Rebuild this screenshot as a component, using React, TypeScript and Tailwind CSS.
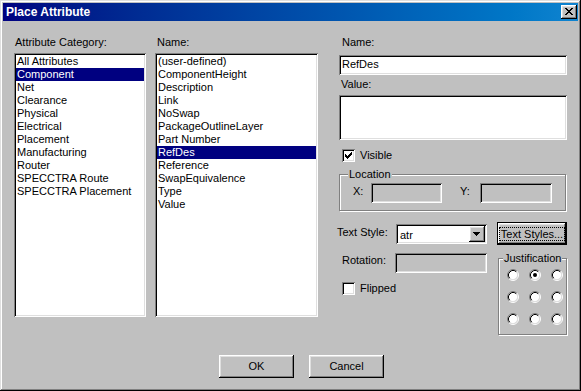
import React from "react";

const sunken =
  "shadow-[inset_1px_1px_#808080,inset_-1px_-1px_#fff,inset_2px_2px_#000,inset_-2px_-2px_#dfdfdf]";
const raised =
  "shadow-[inset_-1px_-1px_#000,inset_1px_1px_#fff,inset_-2px_-2px_#808080,inset_2px_2px_#dfdfdf]";
const etched = "border border-[#808080] shadow-[inset_1px_1px_#fff,1px_1px_#fff]";

const categories = [
  "All Attributes",
  "Component",
  "Net",
  "Clearance",
  "Physical",
  "Electrical",
  "Placement",
  "Manufacturing",
  "Router",
  "SPECCTRA Route",
  "SPECCTRA Placement",
];

const names = [
  "(user-defined)",
  "ComponentHeight",
  "Description",
  "Link",
  "NoSwap",
  "PackageOutlineLayer",
  "Part Number",
  "RefDes",
  "Reference",
  "SwapEquivalence",
  "Type",
  "Value",
];

const CHECK = ["......X", ".....XX", "X...XXX", "XX.XXX.", "XXXXX..", ".XXX...", "..X...."];
const CLOSE_X = ["XX....XX", ".XX..XX.", "..XXXX..", "...XX...", "..XXXX..", ".XX..XX.", "XX....XX"];
const ARROW = ["XXXXXXX", ".XXXXX.", "..XXX..", "...X..."];

function Pixels({ rows }: { rows: string[] }) {
  return (
    <svg width={rows[0].length} height={rows.length} shapeRendering="crispEdges" className="block">
      {rows.flatMap((r, y) =>
        [...r].map((c, x) =>
          c === "X" ? <rect key={`${x}-${y}`} x={x} y={y} width={1} height={1} fill="#000" /> : null
        )
      )}
    </svg>
  );
}

function ListBox({ items, selected, width }: { items: string[]; selected: string; width: string }) {
  return (
    <div className={`${width} h-[264px] bg-white p-[2px] ${sunken}`}>
      {items.map((it) => (
        <div
          key={it}
          className={`h-[13px] pl-[1px] whitespace-nowrap ${
            it === selected ? "bg-[#000080] text-white" : "text-black"
          }`}
        >
          {it}
        </div>
      ))}
    </div>
  );
}

function CheckBox({ checked }: { checked?: boolean }) {
  return (
    <div className={`w-[13px] h-[13px] shrink-0 bg-white p-[3px] ${sunken}`}>
      {checked && <Pixels rows={CHECK} />}
    </div>
  );
}

function Radio({ on }: { on?: boolean }) {
  return (
    <svg width="12" height="12" viewBox="0 0 12 12" className="block">
      <circle cx="6" cy="6" r="4.5" fill="#fff" />
      <path d="M2.11 9.89A5.5 5.5 0 0 1 9.89 2.11" stroke="#808080" fill="none" />
      <path d="M9.89 2.11A5.5 5.5 0 0 1 2.11 9.89" stroke="#fff" fill="none" />
      <path d="M2.82 9.18A4.5 4.5 0 0 1 9.18 2.82" stroke="#000" fill="none" />
      <path d="M9.18 2.82A4.5 4.5 0 0 1 2.82 9.18" stroke="#dfdfdf" fill="none" />
      {on && <circle cx="6" cy="6" r="2" fill="#000" />}
    </svg>
  );
}

function Button({ label }: { label: string }) {
  return (
    <div className={`w-[75px] h-[23px] flex items-center justify-center bg-[#c0c0c0] ${raised}`}>
      {label}
    </div>
  );
}

export default function App() {
  return (
    <div
      className={`w-[581px] h-[391px] bg-[#c0c0c0] p-[3px] flex flex-col text-[11px] leading-[13px] text-black font-['Liberation_Sans',Arial,sans-serif] shadow-[inset_-1px_-1px_#000,inset_1px_1px_#dfdfdf,inset_-2px_-2px_#808080,inset_2px_2px_#fff]`}
    >
      {/* title bar */}
      <div className="h-[18px] shrink-0 flex items-start bg-linear-to-r from-[#000080] to-[#1084d0]">
        <div className="flex-1 pl-[3px] text-[12px] leading-[18px] font-bold text-white">Place Attribute</div>
        <div className={`w-[16px] h-[14px] mt-[2px] mr-[1px] pl-[4px] pt-[3px] bg-[#c0c0c0] ${raised}`}>
          <Pixels rows={CLOSE_X} />
        </div>
      </div>

      <div className="flex-1 flex flex-col">
        <div className="flex pt-[15px] pl-[11px]">
          {/* category column */}
          <div className="w-[132px] flex flex-col">
            <div className="pl-[1px]">Attribute Category:</div>
            <div className="mt-[4px]">
              <ListBox items={categories} selected="Component" width="w-[132px]" />
            </div>
          </div>

          {/* name column */}
          <div className="ml-[9px] w-[163px] flex flex-col">
            <div className="pl-[2px]">Name:</div>
            <div className="mt-[4px]">
              <ListBox items={names} selected="RefDes" width="w-[163px]" />
            </div>
          </div>

          {/* properties column */}
          <div className="ml-[21px] w-[228px] flex flex-col">
            <div className="pl-[3px]">Name:</div>
            <div className={`mt-[6px] h-[20px] bg-white px-[3px] pt-[3px] ${sunken}`}>RefDes</div>
            <div className="mt-[3px] pl-[2px]">Value:</div>
            <div className={`mt-[4px] h-[45px] bg-white ${sunken}`} />

            <div className="mt-[9px] ml-[3px] flex items-start gap-[5px]">
              <CheckBox checked />
              <span>Visible</span>
            </div>

            <div className={`relative mt-[12px] w-[227px] ${etched} pt-[8px] pb-[7px] pl-[13px] flex`}>
              <span className="absolute left-[8px] top-[-7px] px-[1px] bg-[#c0c0c0]">Location</span>
              <div className="w-[18px] pt-[2px]">X:</div>
              <div className={`w-[71px] h-[20px] ${sunken}`} />
              <div className="ml-[18px] w-[20px] pt-[2px]">Y:</div>
              <div className={`w-[72px] h-[20px] ${sunken}`} />
            </div>

            <div className="mt-[11px] -ml-[2px] flex">
              <div className="w-[150px] flex flex-col">
                <div className="mt-[2px] flex items-start">
                  <div className="w-[59px] pt-[2px]">Text Style:</div>
                  <div className={`w-[91px] h-[20px] bg-white p-[2px] flex ${sunken}`}>
                    <div className="flex-1 pl-[2px] pt-[3px]">atr</div>
                    <div className={`w-[16px] h-[16px] bg-[#c0c0c0] pl-[4px] pt-[6px] ${raised}`}>
                      <Pixels rows={ARROW} />
                    </div>
                  </div>
                </div>
                <div className="mt-[9px] flex items-start">
                  <div className="w-[58px] pl-[5px] pt-[1px]">Rotation:</div>
                  <div className={`w-[92px] h-[20px] ${sunken}`} />
                </div>
                <div className="mt-[9px] ml-[5px] flex items-start gap-[5px]">
                  <CheckBox />
                  <span>Flipped</span>
                </div>
              </div>

              <div className="ml-[10px] w-[70px] flex flex-col">
                <div className="w-[70px] h-[23px] border border-black">
                  <div className={`w-full h-full flex items-center justify-center bg-[#c0c0c0] ${raised}`}>
                    <span className="border border-dotted border-black px-[1px] leading-[12px]">
                      Text Styles...
                    </span>
                  </div>
                </div>
                <div className={`relative mt-[13px] ml-[1px] w-[69px] ${etched} pt-[10px] pb-[9px] pl-[8px]`}>
                  <span className="absolute left-[4px] top-[-7px] px-[1px] bg-[#c0c0c0]">Justification</span>
                  <div className="grid grid-cols-[12px_12px_12px] gap-x-[10px] gap-y-[10px]">
                    {[0, 1, 2, 3, 4, 5, 6, 7, 8].map((i) => (
                      <Radio key={i} on={i === 1} />
                    ))}
                  </div>
                </div>
              </div>
            </div>
          </div>
        </div>

        <div className="mt-auto mb-[10px] pl-[216px] flex gap-[15px]">
          <Button label="OK" />
          <Button label="Cancel" />
        </div>
      </div>
    </div>
  );
}
